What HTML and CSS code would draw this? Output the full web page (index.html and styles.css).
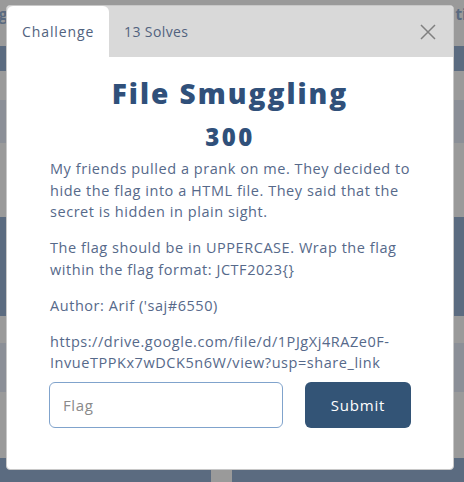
FILE: index.html
```html
<!DOCTYPE html>
<html>
<head>
<meta charset="utf-8">
<link rel="stylesheet" href="styles.css">
</head>
<body>
<div class="page">
  <div class="band gray head"><span class="hl">ng</span><span class="hr">ti</span></div>
  <div class="band dark b1"></div>
  <div class="band gray b2"></div>
  <div class="band mid b3"></div>
  <div class="band gray b4"></div>
  <div class="band dark b5"></div>
  <div class="band gray b6"></div>
  <div class="band mid b7"></div>
  <div class="band gray b8"></div>
  <div class="band dark b9"><div class="block"></div></div>
</div>
<div class="modal">
  <div class="tabs">
    <div class="tab active">Challenge</div>
    <div class="tab">13 Solves</div>
    <svg class="close" width="16" height="16" viewBox="0 0 16 16"><path d="M1 1L15 15M15 1L1 15" stroke="#808080" stroke-width="1.5" fill="none"/></svg>
  </div>
  <div class="content">
    <h1 class="title">File Smuggling</h1>
    <h2 class="points">300</h2>
    <div class="desc">
      <p>My friends pulled a prank on me. They decided to hide the flag into a HTML file. They said that the secret is hidden in plain sight.</p>
      <p>The flag should be in UPPERCASE. Wrap the flag within the flag format: JCTF2023{}</p>
      <p>Author: Arif ('saj#6550)</p>
      <p>https://drive.google.com/file/d/1PJgXj4RAZe0F-InvueTPPKx7wDCK5n6W/view?usp=share_link</p>
    </div>
    <div class="form">
      <div class="input">Flag</div>
      <div class="btn">Submit</div>
    </div>
  </div>
</div>
</body>
</html>
```
FILE: styles.css
```css
html, body { margin: 0; padding: 0; }
body { width: 464px; height: 482px; overflow: hidden; position: relative; font-family: "Open Sans", "Noto Sans", sans-serif; }
.page { display: flex; flex-direction: column; }
.band { flex: none; }
.gray { background: #9a9a9a; }
.dark { background: #5b6b80; }
.mid { background: #8b8f97; }
.head { height: 46px; position: relative; }
.hl, .hr { position: absolute; top: 3px; font-weight: 700; font-size: 16px; color: #5a6a80; }
.hl { left: -12px; }
.hr { right: -3px; }
.b1 { height: 25px; }
.b2 { height: 29px; }
.b3 { height: 43px; }
.b4 { height: 74px; }
.b5 { height: 99px; }
.b6 { height: 27px; }
.b7 { height: 49px; }
.b8 { height: 66px; }
.b9 { height: 24px; display: flex; }
.block { margin-left: 211px; width: 21px; background: #9a9a9a; }

.modal { position: absolute; left: 6px; top: 5px; width: 448px; height: 465px; background: #fff; border-radius: 4px; box-sizing: border-box; border: 1px solid #c8c8c8; overflow: hidden; }
.tabs { height: 51px; background: #d9d9d9; display: flex; align-items: stretch; position: relative; }
.tab { padding: 0 15px; display: flex; align-items: center; font-size: 14px; color: #51627e; letter-spacing: 0.4px; }
.tab.active { background: #fff; width: 102px; box-sizing: border-box; border-radius: 6px 6px 0 0; letter-spacing: 0.9px; }
.close { position: absolute; right: 17px; top: 18px; }
.content { padding: 0 40px 0 43px; }
.title { margin: 19px 3px 0 0; text-align: center; font-size: 28px; font-weight: 800; color: #30507a; line-height: 34px; letter-spacing: 2px; }
.points { margin: 12px 3px 0 0; text-align: center; font-size: 24px; font-weight: 800; color: #30507a; line-height: 30px; letter-spacing: 2.5px; }
.desc { margin-top: 6px; font-size: 14.5px; line-height: 21.6px; color: #56698a; letter-spacing: 0.55px; }
.desc p { margin: 0 0 14.4px; }
.desc p:last-child { margin-bottom: 0; }
.form { display: flex; gap: 22px; margin: 8px 0 0 -1px; }
.input { width: 234px; height: 46px; box-sizing: border-box; border: 1px solid #80a3cc; border-radius: 6px; padding: 0 13px; display: flex; align-items: center; font-size: 15px; color: #8a8a8a; letter-spacing: 0.6px; }
.btn { width: 106px; height: 46px; background: #335476; border-radius: 6px; color: #fff; font-size: 15px; display: flex; align-items: center; justify-content: center; letter-spacing: 0.8px; }
```
